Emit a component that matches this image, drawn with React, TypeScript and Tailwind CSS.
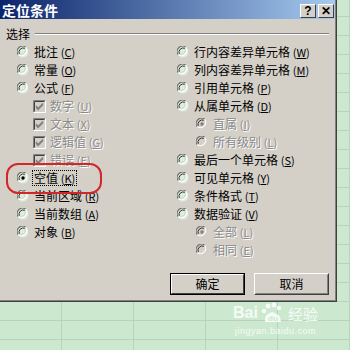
import React from "react";

const FONT = "font-['Noto_Sans_CJK_SC','Noto_Sans',sans-serif]";

function Radio({ checked, disabled }: { checked?: boolean; disabled?: boolean }) {
  const fill = disabled ? "#d4d0c8" : "#dceedc";
  const dot = disabled ? "#808080" : "#000000";
  return (
    <svg width="12" height="12" viewBox="0 0 12 12" className="shrink-0">
      <circle cx="6" cy="6" r="5.5" fill={fill} />
      <path d="M1.2 8.6 A5.3 5.3 0 0 1 8.6 1.2" stroke="#707070" strokeWidth="1.1" fill="none" />
      <path d="M8.6 1.2 A5.3 5.3 0 0 1 1.2 8.6" stroke="#ffffff" strokeWidth="1.1" fill="none" />
      <path d="M2.4 8.0 A4.2 4.2 0 0 1 8.0 2.4" stroke="#303030" strokeWidth="1" fill="none" />
      <path d="M8.0 2.4 A4.2 4.2 0 0 1 2.4 8.0" stroke="#d4d0c8" strokeWidth="1" fill="none" />
      {checked && <circle cx="6" cy="6" r="1.7" fill={dot} />}
    </svg>
  );
}

function Check() {
  return (
    <svg width="13" height="13" viewBox="0 0 13 13" className="shrink-0">
      <rect x="0" y="0" width="13" height="13" fill="#d4d0c8" />
      <path d="M0.5 12.5 V0.5 H12.5" stroke="#808080" fill="none" />
      <path d="M1.5 11.5 V1.5 H11.5" stroke="#404040" fill="none" />
      <path d="M0.5 12.5 H12.5 V0.5" stroke="#ffffff" fill="none" />
      <path d="M3 6 L5 8.5 L10 3.5 M3 7 L5 9.5 L10 4.5" stroke="#808080" strokeWidth="1.3" fill="none" />
    </svg>
  );
}

function Label({ text, k, disabled, focus }: { text: string; k: string; disabled?: boolean; focus?: boolean }) {
  return (
    <span
      className={
        "whitespace-nowrap text-[12px] leading-[14px] px-[1px] " +
        (disabled ? "text-[#8a8a8a] [text-shadow:1px_1px_0_#ffffff] " : "text-black ") +
        (focus ? "outline outline-1 outline-dotted outline-black" : "")
      }
    >
      {text} <span className="text-[11px]">(<span className="underline">{k}</span>)</span>
    </span>
  );
}

type Row = { kind: "radio" | "check" | "sub"; text: string; k: string; checked?: boolean; disabled?: boolean; focus?: boolean };

const left: Row[] = [
  { kind: "radio", text: "批注", k: "C" },
  { kind: "radio", text: "常量", k: "O" },
  { kind: "radio", text: "公式", k: "F" },
  { kind: "check", text: "数字", k: "U", disabled: true },
  { kind: "check", text: "文本", k: "X", disabled: true },
  { kind: "check", text: "逻辑值", k: "G", disabled: true },
  { kind: "check", text: "错误", k: "E", disabled: true },
  { kind: "radio", text: "空值", k: "K", checked: true, focus: true },
  { kind: "radio", text: "当前区域", k: "R" },
  { kind: "radio", text: "当前数组", k: "A" },
  { kind: "radio", text: "对象", k: "B" },
];

const right: Row[] = [
  { kind: "radio", text: "行内容差异单元格", k: "W" },
  { kind: "radio", text: "列内容差异单元格", k: "M" },
  { kind: "radio", text: "引用单元格", k: "P" },
  { kind: "radio", text: "从属单元格", k: "D" },
  { kind: "sub", text: "直属", k: "I", checked: true, disabled: true },
  { kind: "sub", text: "所有级别", k: "L", disabled: true },
  { kind: "radio", text: "最后一个单元格", k: "S" },
  { kind: "radio", text: "可见单元格", k: "Y" },
  { kind: "radio", text: "条件格式", k: "T" },
  { kind: "radio", text: "数据验证", k: "V" },
  { kind: "sub", text: "全部", k: "L", checked: true, disabled: true },
  { kind: "sub", text: "相同", k: "E", disabled: true },
];

function RowItem({ r }: { r: Row }) {
  if (r.kind === "check") {
    return (
      <div className="h-[18px] flex items-center gap-[3px] pl-[16px]">
        <Check />
        <Label text={r.text} k={r.k} disabled />
      </div>
    );
  }
  return (
    <div className={"h-[18px] flex items-center gap-[4px] " + (r.kind === "sub" ? "pl-[19px]" : "")}>
      <Radio checked={r.checked} disabled={r.disabled} />
      <Label text={r.text} k={r.k} disabled={r.disabled} focus={r.focus} />
    </div>
  );
}

function TitleBtn({ children }: { children: React.ReactNode }) {
  return (
    <div className="w-[16px] h-[14px] bg-[#d4d0c8] border border-t-white border-l-white border-r-[#404040] border-b-[#404040] flex items-center justify-center text-[12px] font-bold leading-none text-black font-['Liberation_Sans',sans-serif]">
      {children}
    </div>
  );
}

export default function App() {
  return (
    <div
      className={
        "relative w-[350px] h-[350px] overflow-hidden bg-[#cce8cf] " +
        "bg-[linear-gradient(to_right,#b8d3bb_1px,transparent_1px),linear-gradient(to_bottom,#b8d3bb_1px,transparent_1px)] " +
        "bg-[size:72px_19px] bg-[position:61px_16px] " +
        FONT
      }
    >
      <div className="w-[337px] h-[302px] bg-[#d4d0c8] border-r border-b border-r-[#404040] border-b-[#404040] flex flex-col">
        <div className="flex-1 flex flex-col border-r border-b border-r-[#808080] border-b-[#808080]">
          {/* title bar */}
          <div className="h-[19px] flex items-center justify-between bg-[linear-gradient(to_right,#0a246a,#a6caf0)] pl-[2px] pr-[1px]">
            <span className="text-white font-bold text-[14px] leading-none">定位条件</span>
            <div className="flex gap-[2px] pt-[2px]">
              <TitleBtn>?</TitleBtn>
              <TitleBtn>✕</TitleBtn>
            </div>
          </div>
          {/* group header */}
          <div className="mt-[7px] h-[16px] flex items-center pl-[6px] pr-[6px] gap-[5px]">
            <span className="text-[12px] leading-none text-black">选择</span>
            <div className="flex-1 flex flex-col">
              <div className="h-px bg-[#808080]" />
              <div className="h-px bg-white" />
            </div>
          </div>
          {/* options */}
          <div className="flex pl-[17px] pt-[1px]">
            <div className="w-[160px] flex flex-col">
              {left.map((r, i) => (
                <RowItem key={i} r={r} />
              ))}
            </div>
            <div className="flex flex-col">
              {right.map((r, i) => (
                <RowItem key={i} r={r} />
              ))}
            </div>
          </div>
          {/* buttons */}
          <div className="mt-[14px] flex justify-end gap-[9px] pr-[6px]">
            <div className="w-[75px] h-[22px] border border-black">
              <div className="w-full h-full border border-t-white border-l-white border-r-[#404040] border-b-[#404040] flex items-center justify-center text-[12px] text-black">
                确定
              </div>
            </div>
            <div className="w-[75px] h-[22px] border border-t-white border-l-white border-r-[#404040] border-b-[#404040]">
              <div className="w-full h-full border border-transparent border-r-[#808080] border-b-[#808080] flex items-center justify-center text-[12px] text-black">
                取消
              </div>
            </div>
          </div>
        </div>
      </div>

      {/* red annotation */}
      <div className="absolute left-[6px] top-[163px] w-[96px] h-[31px] rounded-[12px] border-[2.5px] border-[#d02828]" />

      {/* watermark */}
      <div className="absolute left-[233px] top-[302px] flex flex-col items-center text-white/80">
        <div className="flex items-center gap-[2px] font-['Liberation_Sans',sans-serif] font-bold text-[16px] leading-none">
          <span>Bai</span>
          <svg width="26" height="22" viewBox="0 0 26 22">
            <circle cx="8" cy="4" r="2.5" fill="white" fillOpacity="0.8" />
            <circle cx="14" cy="3" r="2.5" fill="white" fillOpacity="0.8" />
            <circle cx="19" cy="6" r="2.3" fill="white" fillOpacity="0.8" />
            <circle cx="4" cy="9" r="2.3" fill="white" fillOpacity="0.8" />
            <path d="M5 20 Q4 12 12 10 Q21 12 21 20 Z" fill="white" fillOpacity="0.8" />
            <text x="8" y="19" fontSize="8" fill="#cce8cf" fontFamily="Liberation Sans">du</text>
          </svg>
          <span className={"text-[15px] font-normal " + FONT}>经验</span>
        </div>
        <span className="text-[9px] leading-none mt-[3px] tracking-[0.5px] font-['Liberation_Sans',sans-serif]">jingyan.baidu.com</span>
      </div>
    </div>
  );
}
